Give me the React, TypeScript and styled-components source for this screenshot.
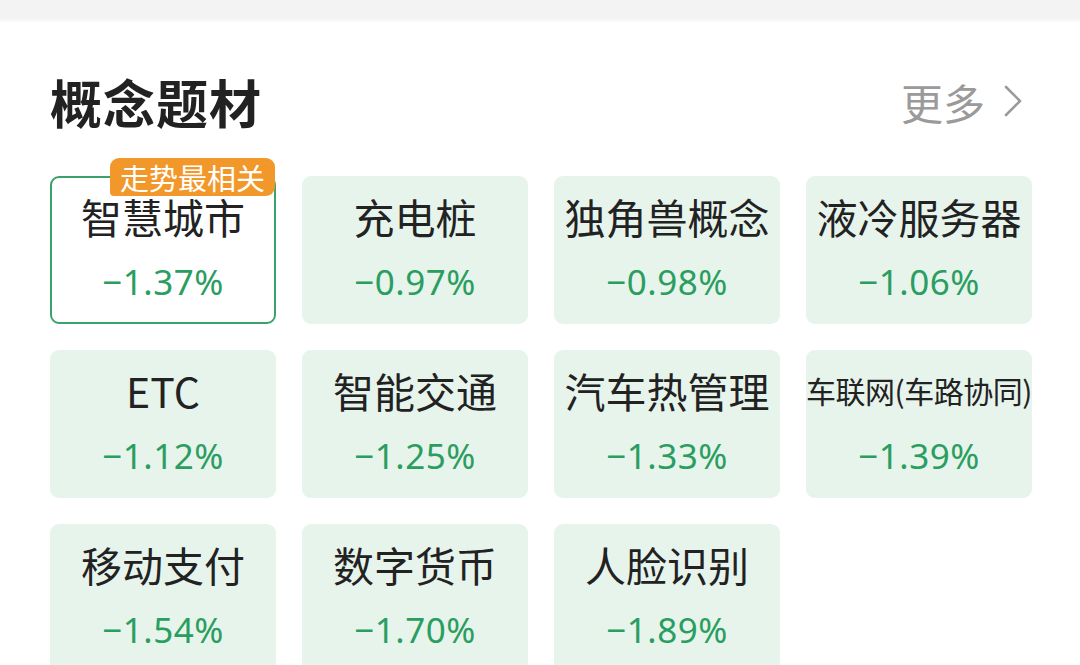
import styled, { createGlobalStyle } from 'styled-components';

const GlobalStyle = createGlobalStyle`
  html, body {
    margin: 0;
    padding: 0;
    background: #ffffff;
  }
  body {
    font-family: "Noto Sans", "Noto Sans CJK SC", sans-serif;
    overflow: hidden;
  }
`;

const Page = styled.div`
  width: 1080px;
  height: 665px;
  overflow: hidden;
  background: #ffffff;
`;

const TopStrip = styled.div`
  height: 22px;
  background: linear-gradient(#f3f3f3 80%, #fbfbfb);
`;

const Section = styled.div`
  padding: 48px 49px 0 50px;
`;

const Header = styled.div`
  display: flex;
  align-items: center;
  justify-content: space-between;
  height: 62px;
`;

const Title = styled.h2`
  margin: 0;
  font-family: "Noto Sans CJK SC", sans-serif;
  font-size: 52px;
  font-weight: 700;
  color: #222222;
  letter-spacing: 1px;
`;

const More = styled.div`
  display: flex;
  align-items: center;
  gap: 18px;
  font-family: "Noto Sans CJK SC", sans-serif;
  font-size: 42px;
  color: #9a9a9a;
  padding-right: 8px;
`;

const Grid = styled.div`
  display: grid;
  grid-template-columns: repeat(4, 226px);
  grid-auto-rows: 148px;
  column-gap: 26px;
  row-gap: 26px;
  margin-top: 44px;
`;

const Card = styled.div<{ $active: boolean }>`
  position: relative;
  display: flex;
  flex-direction: column;
  align-items: center;
  box-sizing: border-box;
  border-radius: 9px;
  background: ${(p) => (p.$active ? '#ffffff' : '#e7f4ec')};
  border: 2px solid ${(p) => (p.$active ? '#3aa26a' : 'transparent')};
  padding-top: 18px;
`;

const Name = styled.div<{ $small: boolean }>`
  font-family: "Noto Sans CJK SC", sans-serif;
  font-size: ${(p) => (p.$small ? '30px' : '41px')};
  color: #222222;
  line-height: 40px;
  height: 40px;
  white-space: nowrap;
  letter-spacing: ${(p) => (p.$small ? '-0.5px' : '0')};
`;

const Change = styled.div`
  margin-top: 22px;
  font-family: "Noto Sans", sans-serif;
  font-size: 35px;
  line-height: 48px;
  color: #2a9e60;
  letter-spacing: 0.5px;
`;

const Badge = styled.div`
  position: absolute;
  top: -20px;
  right: -1px;
  height: 38px;
  padding: 0 10px;
  display: flex;
  align-items: center;
  border-radius: 9px 9px 9px 4px;
  background: #f2982a;
  color: #ffffff;
  font-family: "Noto Sans CJK SC", sans-serif;
  font-size: 29px;
  line-height: 38px;
`;

type Item = { name: string; change: string; badge?: string; small?: boolean };

const items: Item[] = [
  { name: '智慧城市', change: '−1.37%', badge: '走势最相关' },
  { name: '充电桩', change: '−0.97%' },
  { name: '独角兽概念', change: '−0.98%' },
  { name: '液冷服务器', change: '−1.06%' },
  { name: 'ETC', change: '−1.12%' },
  { name: '智能交通', change: '−1.25%' },
  { name: '汽车热管理', change: '−1.33%' },
  { name: '车联网(车路协同)', change: '−1.39%', small: true },
  { name: '移动支付', change: '−1.54%' },
  { name: '数字货币', change: '−1.70%' },
  { name: '人脸识别', change: '−1.89%' },
];

function Chevron() {
  return (
    <svg width="20" height="34" viewBox="0 0 20 34" fill="none">
      <path d="M3 3 L17 17 L3 31" stroke="#9a9a9a" strokeWidth="2.6" strokeLinecap="round" strokeLinejoin="round" />
    </svg>
  );
}

export default function App() {
  return (
    <Page>
      <GlobalStyle />
      <TopStrip />
      <Section>
        <Header>
          <Title>概念题材</Title>
          <More>
            更多
            <Chevron />
          </More>
        </Header>
        <Grid>
          {items.map((it) => (
            <Card key={it.name} $active={!!it.badge}>
              {it.badge && <Badge>{it.badge}</Badge>}
              <Name $small={!!it.small}>{it.name}</Name>
              <Change>{it.change}</Change>
            </Card>
          ))}
        </Grid>
      </Section>
    </Page>
  );
}
